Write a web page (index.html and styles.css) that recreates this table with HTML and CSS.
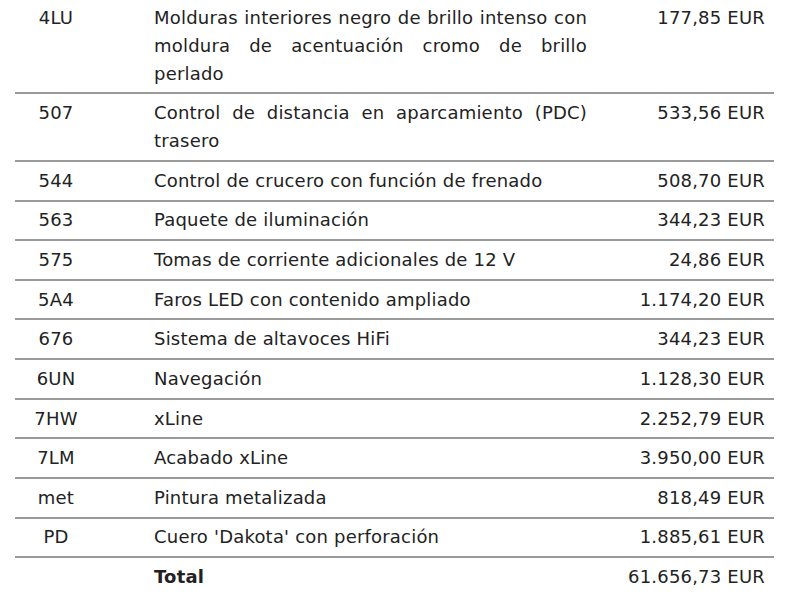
FILE: index.html
```html
<!DOCTYPE html>
<html lang="es">
<head>
<meta charset="utf-8">
<title>Equipamiento opcional</title>
<link rel="stylesheet" href="styles.css">
</head>
<body>
<table class="options">
  <colgroup>
    <col class="c-code">
    <col class="c-desc">
    <col class="c-price">
  </colgroup>
  <tbody>
    <tr><td class="code">4LU</td><td class="desc">Molduras interiores negro de brillo intenso con moldura de acentuación cromo de brillo perlado</td><td class="price">177,85 EUR</td></tr>
    <tr><td class="code">507</td><td class="desc">Control de distancia en aparcamiento (PDC) trasero</td><td class="price">533,56 EUR</td></tr>
    <tr><td class="code">544</td><td class="desc">Control de crucero con función de frenado</td><td class="price">508,70 EUR</td></tr>
    <tr><td class="code">563</td><td class="desc">Paquete de iluminación</td><td class="price">344,23 EUR</td></tr>
    <tr><td class="code">575</td><td class="desc">Tomas de corriente adicionales de 12 V</td><td class="price">24,86 EUR</td></tr>
    <tr><td class="code">5A4</td><td class="desc">Faros LED con contenido ampliado</td><td class="price">1.174,20 EUR</td></tr>
    <tr><td class="code">676</td><td class="desc">Sistema de altavoces HiFi</td><td class="price">344,23 EUR</td></tr>
    <tr><td class="code">6UN</td><td class="desc">Navegación</td><td class="price">1.128,30 EUR</td></tr>
    <tr><td class="code">7HW</td><td class="desc">xLine</td><td class="price">2.252,79 EUR</td></tr>
    <tr><td class="code">7LM</td><td class="desc">Acabado xLine</td><td class="price">3.950,00 EUR</td></tr>
    <tr><td class="code">met</td><td class="desc">Pintura metalizada</td><td class="price">818,49 EUR</td></tr>
    <tr><td class="code">PD</td><td class="desc">Cuero 'Dakota' con perforación</td><td class="price">1.885,61 EUR</td></tr>
    <tr class="total"><td class="code"></td><td class="desc"><strong>Total</strong></td><td class="price">61.656,73 EUR</td></tr>
  </tbody>
</table>
</body>
</html>
```

FILE: styles.css
```css
html, body {
  margin: 0;
  padding: 0;
  background: #ffffff;
}

body {
  font-family: "DejaVu Sans", Verdana, sans-serif;
  font-size: 18px;
  letter-spacing: 0.2px;
  color: #222222;
}

.options {
  border-collapse: collapse;
  table-layout: fixed;
  width: 759px;
  margin: -1.3px 0 0 15px;
}

.c-code { width: 130px; }
.c-desc { width: 451px; }
.c-price { width: 178px; }

.options td {
  line-height: 28px;
  padding: 4.82px 9px 4.82px 9px;
  vertical-align: top;
  border-bottom: 2px solid #9a9a9a;
}

.options .total td {
  border-bottom: none;
}

.options td.code {
  text-align: center;
  padding-left: 0;
  padding-right: 48px;
}

.options td.desc {
  text-align: justify;
}

.options td.price {
  text-align: right;
  white-space: nowrap;
}

.options strong {
  font-weight: bold;
}
```
